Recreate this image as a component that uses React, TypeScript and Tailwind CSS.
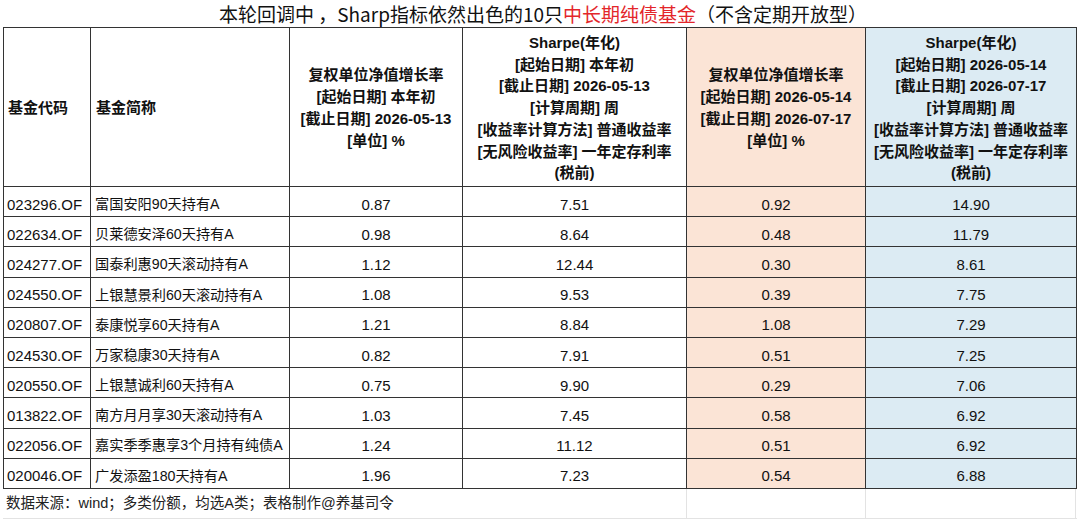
import React from "react";

const rows: [string, string, string, string, string, string][] = [
  ["023296.OF", "富国安阳90天持有A", "0.87", "7.51", "0.92", "14.90"],
  ["022634.OF", "贝莱德安泽60天持有A", "0.98", "8.64", "0.48", "11.79"],
  ["024277.OF", "国泰利惠90天滚动持有A", "1.12", "12.44", "0.30", "8.61"],
  ["024550.OF", "上银慧景利60天滚动持有A", "1.08", "9.53", "0.39", "7.75"],
  ["020807.OF", "泰康悦享60天持有A", "1.21", "8.84", "1.08", "7.29"],
  ["024530.OF", "万家稳康30天持有A", "0.82", "7.91", "0.51", "7.25"],
  ["020550.OF", "上银慧诚利60天持有A", "0.75", "9.90", "0.29", "7.06"],
  ["013822.OF", "南方月月享30天滚动持有A", "1.03", "7.45", "0.58", "6.92"],
  ["022056.OF", "嘉实季季惠享3个月持有纯债A", "1.24", "11.12", "0.51", "6.92"],
  ["020046.OF", "广发添盈180天持有A", "1.96", "7.23", "0.54", "6.88"],
];

const font = { fontFamily: '"Liberation Sans", "Noto Sans CJK SC", sans-serif' };

export default function App() {
  return (
    <div className="w-[1080px] h-[519px] bg-white overflow-hidden text-[#111]" style={font}>
      <div className="h-[27px] flex items-center justify-center pl-[6px] pb-[1px] text-[19px] leading-none [font-family:'Noto_Sans_CJK_SC',sans-serif]">
        <span>本轮回调中 ，Sharp指标依然出色的10只</span>
        <span className="text-[#e3262a]">中长期纯债基金</span>
        <span>（不含定期开放型）</span>
      </div>
      <div className="pl-[3px]">
        <table className="border-collapse table-fixed w-[1073px]">
          <colgroup>
            <col className="w-[87px]" />
            <col className="w-[199px]" />
            <col className="w-[173px]" />
            <col className="w-[224px]" />
            <col className="w-[179px]" />
            <col className="w-[211px]" />
          </colgroup>
          <thead>
            <tr className="h-[159px] text-[15px] font-semibold leading-[21.8px]">
              <th className="border border-[#333] text-left align-middle pl-[4px] pt-[2px] font-semibold">基金代码</th>
              <th className="border border-[#333] text-left align-middle pl-[5px] pt-[2px] font-semibold">基金简称</th>
              <th className="border border-[#333] text-center align-middle pt-[2px] font-semibold whitespace-nowrap">
                <div>复权单位净值增长率</div>
                <div>[起始日期] 本年初</div>
                <div>[截止日期] 2026-05-13</div>
                <div>[单位] %</div>
              </th>
              <th className="border border-[#333] text-center align-middle pt-[2px] font-semibold whitespace-nowrap">
                <div>Sharpe(年化)</div>
                <div>[起始日期] 本年初</div>
                <div>[截止日期] 2026-05-13</div>
                <div>[计算周期] 周</div>
                <div>[收益率计算方法] 普通收益率</div>
                <div>[无风险收益率] 一年定存利率</div>
                <div>(税前)</div>
              </th>
              <th className="border border-[#333] text-center align-middle pt-[2px] bg-[#fbe4d6] font-semibold whitespace-nowrap">
                <div>复权单位净值增长率</div>
                <div>[起始日期] 2026-05-14</div>
                <div>[截止日期] 2026-07-17</div>
                <div>[单位] %</div>
              </th>
              <th className="border border-[#333] text-center align-middle pt-[2px] bg-[#dcebf3] font-semibold whitespace-nowrap">
                <div>Sharpe(年化)</div>
                <div>[起始日期] 2026-05-14</div>
                <div>[截止日期] 2026-07-17</div>
                <div>[计算周期] 周</div>
                <div>[收益率计算方法] 普通收益率</div>
                <div>[无风险收益率] 一年定存利率</div>
                <div>(税前)</div>
              </th>
            </tr>
          </thead>
          <tbody>
            {rows.map((r) => (
              <tr key={r[0]} className="h-[30.2px] text-[15px] leading-none">
                <td className="border border-[#333] pl-[3px] pt-[5px] align-middle whitespace-nowrap">{r[0]}</td>
                <td className="border border-[#333] pl-[4px] pt-[5px] align-middle whitespace-nowrap text-[14.2px]">{r[1]}</td>
                <td className="border border-[#333] text-center pt-[5px] align-middle">{r[2]}</td>
                <td className="border border-[#333] text-center pt-[5px] align-middle">{r[3]}</td>
                <td className="border border-[#333] text-center pt-[5px] align-middle bg-[#fbe4d6]">{r[4]}</td>
                <td className="border border-[#333] text-center pt-[5px] align-middle bg-[#dcebf3]">{r[5]}</td>
              </tr>
            ))}
          </tbody>
        </table>
        <div className="flex h-[30px] border-b border-[#e3e3e3] w-[1074px]">
          <div className="w-[683px] flex items-center pl-[3px] text-[14.5px] text-[#222] whitespace-nowrap">
            数据来源：wind；多类份额，均选A类；表格制作@养基司令
          </div>
          <div className="w-[179px] border-l border-[#e3e3e3]" />
          <div className="w-[211px] border-l border-r border-[#e3e3e3]" />
        </div>
      </div>
    </div>
  );
}
